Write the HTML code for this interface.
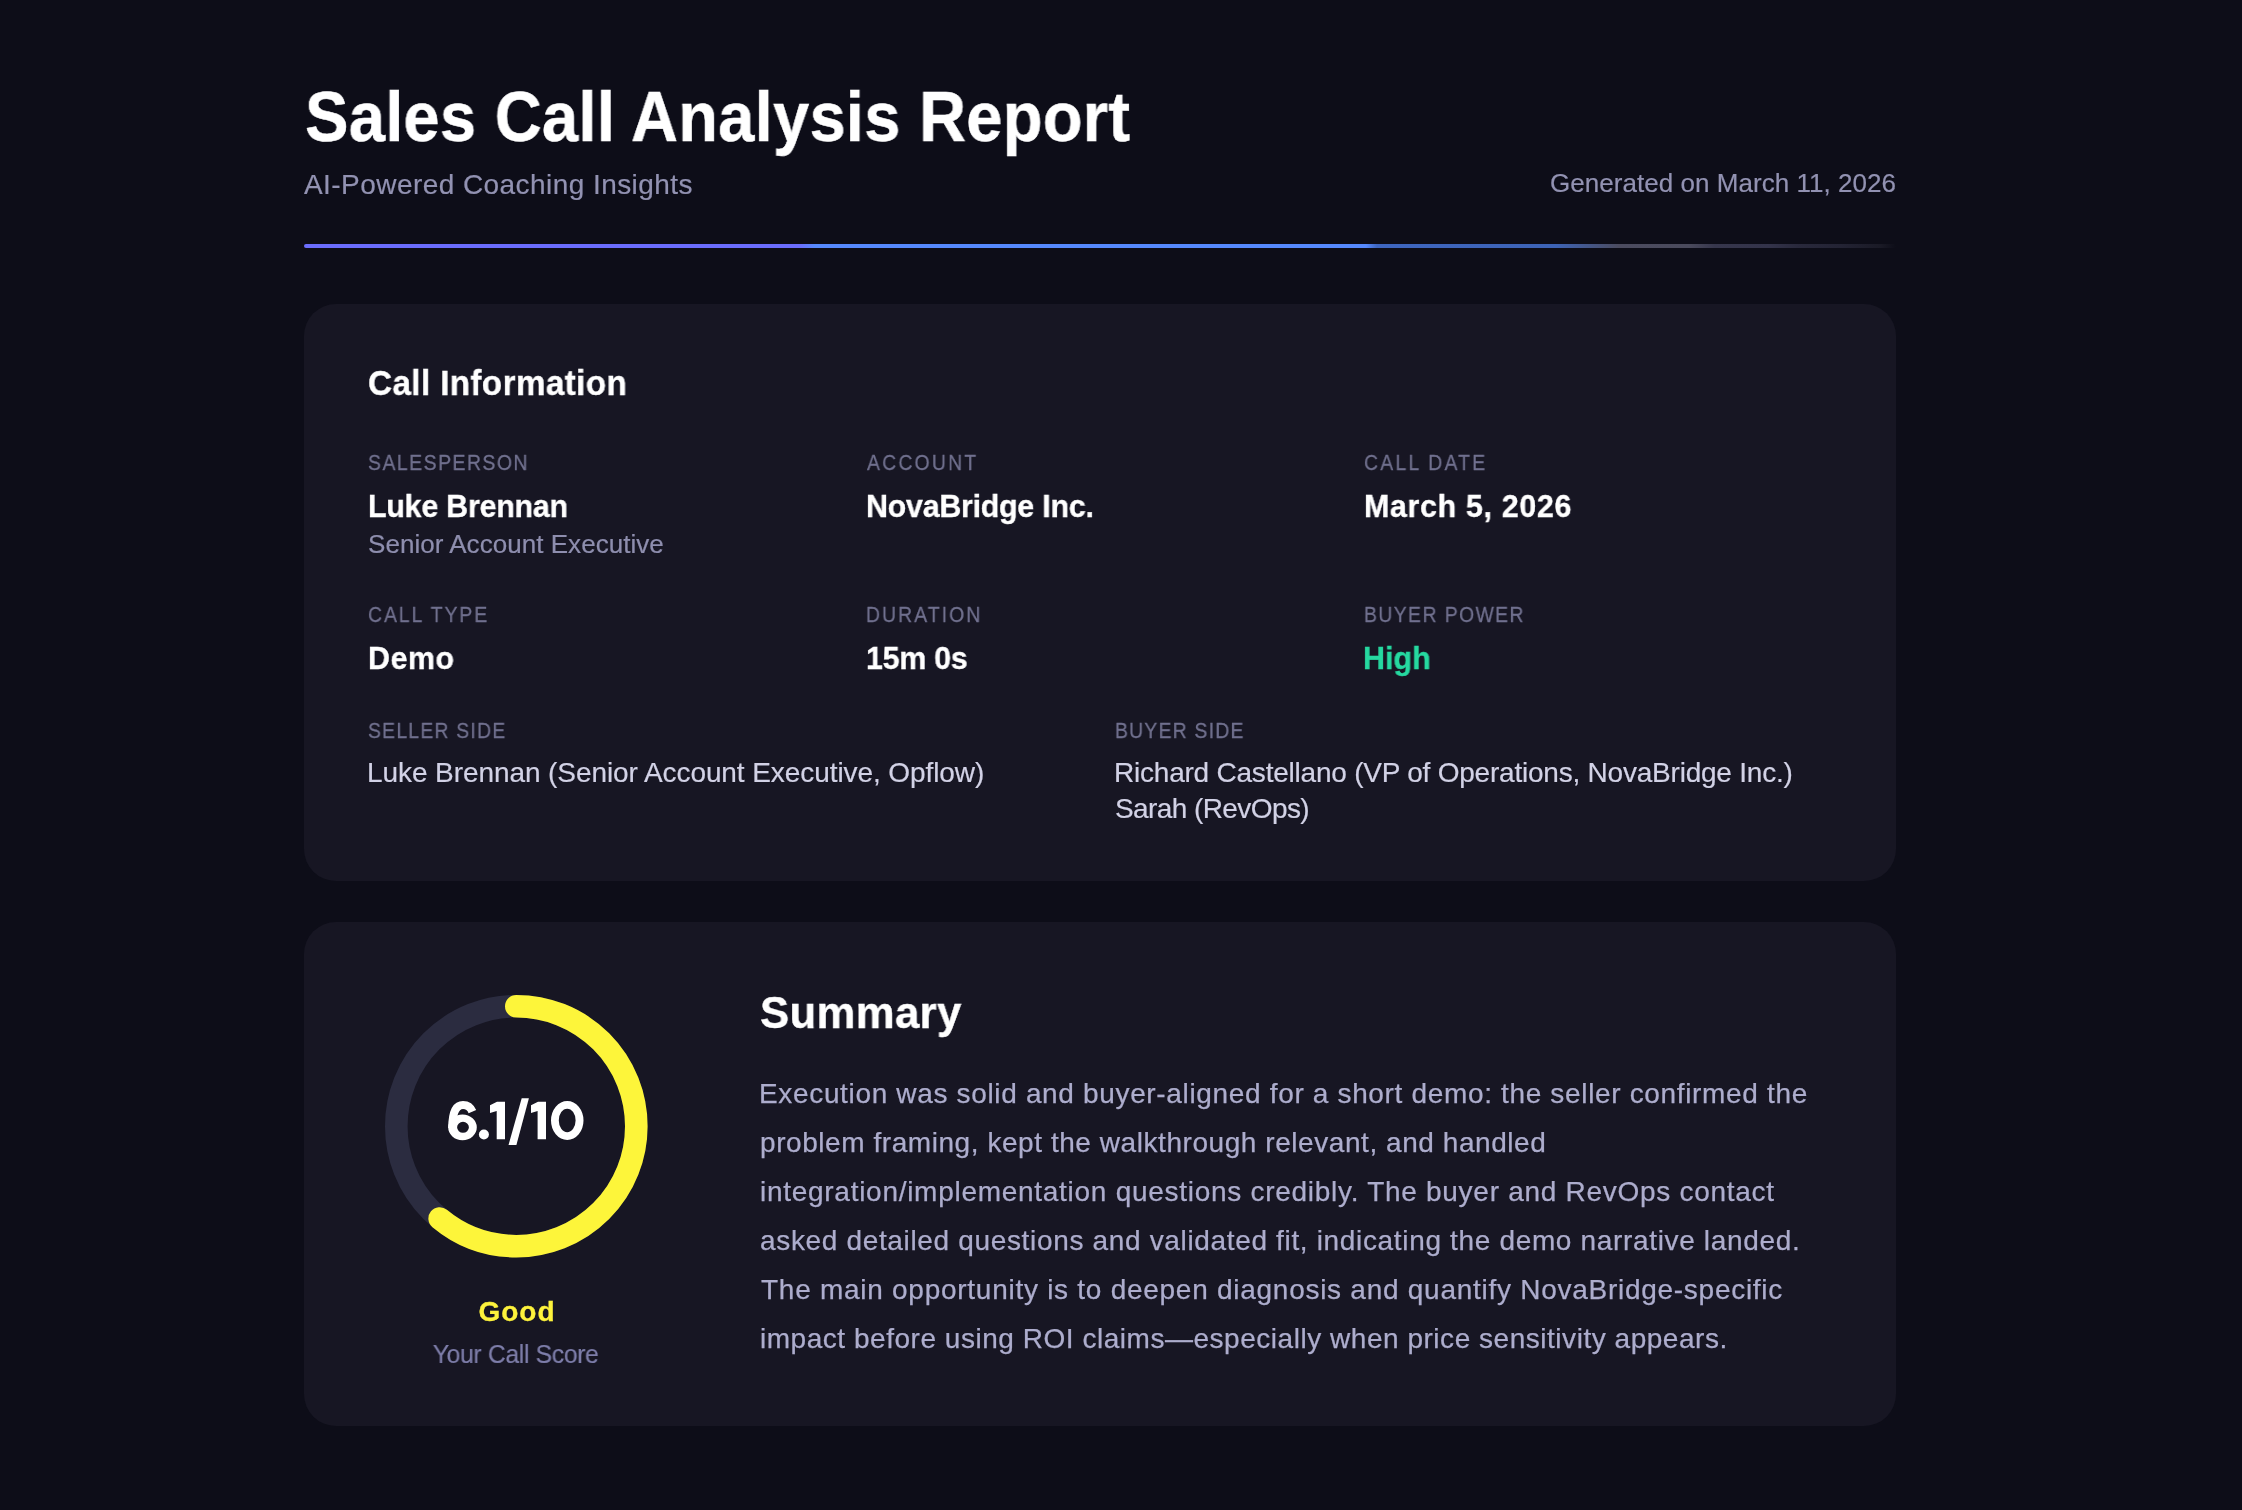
<!DOCTYPE html><html><head><meta charset="utf-8"><style>
html,body{margin:0;padding:0;}
@media (max-width:1300px){body{zoom:0.5;}}
body{width:2242px;height:1510px;background:#0d0d18;position:relative;overflow:hidden;font-family:"Liberation Sans",sans-serif;}
.t{position:absolute;white-space:nowrap;line-height:1;will-change:transform;}
.card{position:absolute;left:304px;width:1592px;background:#171623;border-radius:32px;}
.line{position:absolute;left:304px;top:244px;width:1592px;height:4px;border-radius:2px;background:linear-gradient(90deg,#6b6dfd 0%,#6b6dfd 31.1%,#5689fd 32.1%,#5689fd 66.7%,#3e66c0 67.4%,#3d63b6 78.6%,#4b4b5f 82.6%,#4a4a5c 87%,#36364c 88.6%,#33334a 92%,#29293c 93.8%,#232334 96.5%,#1a1a26 99%,rgba(20,20,30,0) 100%);}
</style></head><body>
<div class="line"></div>
<div class="card" style="top:304px;height:577px"></div>
<div class="card" style="top:922px;height:504px"></div>
<svg style="position:absolute;left:376px;top:986px" width="280" height="280" viewBox="0 0 280 280"><circle cx="140.30" cy="140.20" r="120" fill="none" stroke="#2b2c40" stroke-width="22.6"/><circle cx="140.30" cy="140.20" r="120" fill="none" stroke="#fdf53a" stroke-width="22.6" stroke-linecap="round" stroke-dasharray="459.93 753.98" transform="rotate(-90 140.30 140.20)"/></svg>
<svg style="position:absolute;left:0;top:0" width="2242" height="1510" viewBox="0 0 2242 1510"><g fill="#fff"><path fill-rule="evenodd" d="M476.8,1127.3 A14.3,12.9 0 1 1 448.2,1127.3 A14.3,12.9 0 1 1 476.8,1127.3 Z M468.9,1127.3 A5.9,5.5 0 1 0 457.1,1127.3 A5.9,5.5 0 1 0 468.9,1127.3 Z"/><path fill="none" stroke="#fff" stroke-width="8.2" d="M452.3,1128 C452.3,1113 455.5,1105 463,1105 C467.6,1105 470.6,1107.2 472.4,1111.6"/><circle cx="483.9" cy="1134.5" r="5"/><path d="M490,1105.3 L497,1101.8 L505,1101.8 L505,1139.25 L496.7,1139.25 L496.7,1111 L490,1113 Z"/><path d="M521.7,1098.2 L528.9,1098.2 L516.4,1145 L508.5,1145 Z"/><path d="M531,1105.3 L538,1101.8 L546,1101.8 L546,1139.25 L537.6,1139.25 L537.6,1111 L531,1113 Z"/><path fill-rule="evenodd" d="M583.5,1120.5 A16.25,19.5 0 1 1 551,1120.5 A16.25,19.5 0 1 1 583.5,1120.5 Z M575.6,1120.4 A8.4,11.75 0 1 0 558.8,1120.4 A8.4,11.75 0 1 0 575.6,1120.4 Z"/></g></svg>
<div class="t" style="top:81.93px;font-size:70px;color:#fff;font-weight:700;-webkit-text-stroke:0.5px currentColor;letter-spacing:0.26px;left:305.00px;transform-origin:left center;transform:scaleX(0.93);">Sales Call Analysis Report</div>
<div class="t" style="top:171.29px;font-size:28px;color:#9292b2;-webkit-text-stroke:0.2px currentColor;letter-spacing:0.44px;left:304.00px;">AI-Powered Coaching Insights</div>
<div class="t" style="top:169.99px;font-size:26px;color:#9292b2;-webkit-text-stroke:0.2px currentColor;letter-spacing:0.04px;right:346.00px;">Generated on March 11, 2026</div>
<div class="t" style="top:364.57px;font-size:35px;color:#fff;font-weight:700;-webkit-text-stroke:0.35px currentColor;letter-spacing:0.40px;left:368.00px;transform-origin:left center;transform:scaleX(0.95);">Call Information</div>
<div class="t" style="top:451.67px;font-size:22px;color:#71718f;-webkit-text-stroke:0.3px currentColor;letter-spacing:1.74px;left:368.00px;transform-origin:left center;transform:scaleX(0.88);">SALESPERSON</div>
<div class="t" style="top:451.67px;font-size:22px;color:#71718f;-webkit-text-stroke:0.3px currentColor;letter-spacing:2.54px;left:867.00px;transform-origin:left center;transform:scaleX(0.88);">ACCOUNT</div>
<div class="t" style="top:451.67px;font-size:22px;color:#71718f;-webkit-text-stroke:0.3px currentColor;letter-spacing:2.54px;left:1364.00px;transform-origin:left center;transform:scaleX(0.88);">CALL DATE</div>
<div class="t" style="top:490.11px;font-size:32px;color:#fff;font-weight:700;-webkit-text-stroke:0.35px currentColor;letter-spacing:-0.25px;left:368.00px;transform-origin:left center;transform:scaleX(0.95);">Luke Brennan</div>
<div class="t" style="top:490.11px;font-size:32px;color:#fff;font-weight:700;-webkit-text-stroke:0.35px currentColor;letter-spacing:-0.27px;left:866.00px;transform-origin:left center;transform:scaleX(0.95);">NovaBridge Inc.</div>
<div class="t" style="top:490.11px;font-size:32px;color:#fff;font-weight:700;-webkit-text-stroke:0.35px currentColor;letter-spacing:0.70px;left:1364.00px;transform-origin:left center;transform:scaleX(0.95);">March 5, 2026</div>
<div class="t" style="top:531.09px;font-size:26px;color:#8e8eae;-webkit-text-stroke:0.2px currentColor;letter-spacing:0.04px;left:368.00px;">Senior Account Executive</div>
<div class="t" style="top:603.97px;font-size:22px;color:#71718f;-webkit-text-stroke:0.3px currentColor;letter-spacing:2.26px;left:368.00px;transform-origin:left center;transform:scaleX(0.88);">CALL TYPE</div>
<div class="t" style="top:603.97px;font-size:22px;color:#71718f;-webkit-text-stroke:0.3px currentColor;letter-spacing:2.37px;left:866.00px;transform-origin:left center;transform:scaleX(0.88);">DURATION</div>
<div class="t" style="top:603.97px;font-size:22px;color:#71718f;-webkit-text-stroke:0.3px currentColor;letter-spacing:1.62px;left:1364.00px;transform-origin:left center;transform:scaleX(0.88);">BUYER POWER</div>
<div class="t" style="top:642.11px;font-size:32px;color:#fff;font-weight:700;-webkit-text-stroke:0.35px currentColor;letter-spacing:0.52px;left:368.00px;transform-origin:left center;transform:scaleX(0.95);">Demo</div>
<div class="t" style="top:642.11px;font-size:32px;color:#fff;font-weight:700;-webkit-text-stroke:0.35px currentColor;letter-spacing:-0.29px;left:866.00px;transform-origin:left center;transform:scaleX(0.95);">15m 0s</div>
<div class="t" style="top:642.11px;font-size:32px;color:#26d9a0;font-weight:700;-webkit-text-stroke:0.35px currentColor;letter-spacing:0.03px;left:1363.00px;transform-origin:left center;transform:scaleX(0.95);">High</div>
<div class="t" style="top:720.17px;font-size:22px;color:#71718f;-webkit-text-stroke:0.3px currentColor;letter-spacing:1.40px;left:368.00px;transform-origin:left center;transform:scaleX(0.88);">SELLER SIDE</div>
<div class="t" style="top:720.17px;font-size:22px;color:#71718f;-webkit-text-stroke:0.3px currentColor;letter-spacing:1.40px;left:1115.00px;transform-origin:left center;transform:scaleX(0.88);">BUYER SIDE</div>
<div class="t" style="top:759.29px;font-size:28px;color:#d2d2e6;-webkit-text-stroke:0.2px currentColor;letter-spacing:-0.08px;left:367.00px;">Luke Brennan (Senior Account Executive, Opflow)</div>
<div class="t" style="top:759.29px;font-size:28px;color:#d2d2e6;-webkit-text-stroke:0.2px currentColor;letter-spacing:-0.22px;left:1114.00px;">Richard Castellano (VP of Operations, NovaBridge Inc.)</div>
<div class="t" style="top:794.79px;font-size:28px;color:#d2d2e6;-webkit-text-stroke:0.2px currentColor;letter-spacing:-0.59px;left:1115.00px;">Sarah (RevOps)</div>
<div class="t" style="top:1297.69px;font-size:28px;color:#fdf23c;font-weight:700;-webkit-text-stroke:0.3px currentColor;letter-spacing:0.97px;left:517.00px;transform:translateX(-50%);">Good</div>
<div class="t" style="top:1340.79px;font-size:26px;color:#7e7eaa;-webkit-text-stroke:0.2px currentColor;letter-spacing:-0.35px;left:520.00px;transform-origin:left center;transform:translateX(-50%) scaleX(0.95);">Your Call Score</div>
<div class="t" style="top:990.40px;font-size:45px;color:#fff;font-weight:700;-webkit-text-stroke:0.4px currentColor;letter-spacing:0.40px;left:760.00px;transform-origin:left center;transform:scaleX(0.97);">Summary</div>
<div class="t" style="top:1080.09px;font-size:28px;color:#adadcd;-webkit-text-stroke:0.25px currentColor;letter-spacing:0.66px;left:759.00px;">Execution was solid and buyer-aligned for a short demo: the seller confirmed the</div>
<div class="t" style="top:1129.09px;font-size:28px;color:#adadcd;-webkit-text-stroke:0.25px currentColor;letter-spacing:0.56px;left:760.00px;">problem framing, kept the walkthrough relevant, and handled</div>
<div class="t" style="top:1178.09px;font-size:28px;color:#adadcd;-webkit-text-stroke:0.25px currentColor;letter-spacing:0.72px;left:760.00px;">integration/implementation questions credibly. The buyer and RevOps contact</div>
<div class="t" style="top:1227.09px;font-size:28px;color:#adadcd;-webkit-text-stroke:0.25px currentColor;letter-spacing:0.66px;left:760.00px;">asked detailed questions and validated fit, indicating the demo narrative landed.</div>
<div class="t" style="top:1276.09px;font-size:28px;color:#adadcd;-webkit-text-stroke:0.25px currentColor;letter-spacing:0.73px;left:761.00px;">The main opportunity is to deepen diagnosis and quantify NovaBridge-specific</div>
<div class="t" style="top:1325.09px;font-size:28px;color:#adadcd;-webkit-text-stroke:0.25px currentColor;letter-spacing:0.53px;left:760.00px;">impact before using ROI claims—especially when price sensitivity appears.</div>
</body></html>
